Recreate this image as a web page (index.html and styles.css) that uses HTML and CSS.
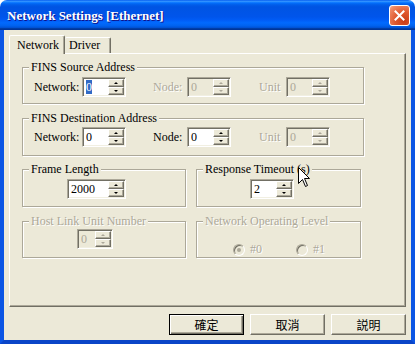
FILE: index.html
```
<!DOCTYPE html>
<html lang="zh-Hant">
<head>
    <meta charset="UTF-8">
    <title>Network Settings [Ethernet]</title>
    <link rel="stylesheet" href="styles.css">
</head>
<body>
    <div class="window">
        <div class="titlebar">
            <span class="title">Network Settings [Ethernet]</span>
            <button class="close" aria-label="Close">
                <svg width="11" height="11" viewBox="0 0 11 11"><path d="M1.5 1.5 L9.5 9.5 M9.5 1.5 L1.5 9.5" stroke="#fff" stroke-width="2" stroke-linecap="square"/></svg>
            </button>
        </div>

        <div class="frame">
            <div class="tabs">
                <div class="tab active">Network</div>
                <div class="tab">Driver</div>
            </div>

            <div class="pane">
                <div class="group g-src">
                    <span class="group-title">FINS Source Address</span>
                    <div class="row">
                        <label class="lbl lbl-net">Network:</label>
                        <div class="spin"><span class="val"><span class="sel">0</span></span><span class="arrows"><span class="arrow up"></span><span class="arrow down"></span></span></div>
                        <label class="lbl lbl-node disabled">Node:</label>
                        <div class="spin off"><span class="val">0</span><span class="arrows"><span class="arrow up"></span><span class="arrow down"></span></span></div>
                        <label class="lbl lbl-unit disabled">Unit</label>
                        <div class="spin off"><span class="val">0</span><span class="arrows"><span class="arrow up"></span><span class="arrow down"></span></span></div>
                    </div>
                </div>

                <div class="group g-dst">
                    <span class="group-title">FINS Destination Address</span>
                    <div class="row">
                        <label class="lbl lbl-net">Network:</label>
                        <div class="spin"><span class="val">0</span><span class="arrows"><span class="arrow up"></span><span class="arrow down"></span></span></div>
                        <label class="lbl lbl-node">Node:</label>
                        <div class="spin"><span class="val">0</span><span class="arrows"><span class="arrow up"></span><span class="arrow down"></span></span></div>
                        <label class="lbl lbl-unit disabled">Unit</label>
                        <div class="spin off"><span class="val">0</span><span class="arrows"><span class="arrow up"></span><span class="arrow down"></span></span></div>
                    </div>
                </div>

                <div class="pair">
                    <div class="group g-small g-frame">
                        <span class="group-title">Frame Length</span>
                        <div class="spin wide"><span class="val">2000</span><span class="arrows"><span class="arrow up"></span><span class="arrow down"></span></span></div>
                    </div>
                    <div class="group g-small g-timeout">
                        <span class="group-title">Response Timeout (s)</span>
                        <div class="spin"><span class="val">2</span><span class="arrows"><span class="arrow up"></span><span class="arrow down"></span></span></div>
                    </div>
                </div>

                <div class="pair">
                    <div class="group g-small g-host">
                        <span class="group-title disabled">Host Link Unit Number</span>
                        <div class="spin off narrow"><span class="val">0</span><span class="arrows"><span class="arrow up"></span><span class="arrow down"></span></span></div>
                    </div>
                    <div class="group g-small g-level">
                        <span class="group-title disabled">Network Operating Level</span>
                        <div class="radios">
                            <span class="radio-item"><span class="radio checked"></span><span class="disabled">#0</span></span>
                            <span class="radio-item"><span class="radio"></span><span class="disabled">#1</span></span>
                        </div>
                    </div>
                </div>
            </div>

            <div class="buttons">
                <button class="btn default">確定</button>
                <button class="btn">取消</button>
                <button class="btn">説明</button>
            </div>
        </div>

        <!-- mouse pointer over the timeout label -->
        <svg class="pointer" width="13" height="21" viewBox="0 0 13 21">
            <path d="M0.5 0.5 L0.5 16.5 L4.5 12.5 L7.5 19.5 L9.5 18.5 L6.5 11.5 L11.5 11.5 Z" fill="#fff" stroke="#000" stroke-width="1"/>
        </svg>
    </div>
</body>
</html>
```

FILE: styles.css
```
* {
    box-sizing: border-box;
}

body {
    margin: 0;
    background: #fff;
    font-family: "Liberation Serif", "Noto Sans CJK TC", serif;
    font-size: 12px;
    color: #000;
}

.window {
    position: relative;
    width: 415px;
    height: 344px;
    display: flex;
    flex-direction: column;
}

/* title bar */
.titlebar {
    height: 30px;
    flex: none;
    display: flex;
    align-items: center;
    justify-content: space-between;
    padding: 0 5px 0 7px;
    border-radius: 7px 7px 0 0;
    background: linear-gradient(to bottom, #0058ee 0%, #3593ff 4%, #288eff 6%, #127dff 8%, #036ffc 10%, #0262ee 14%, #0057e5 20%, #0054e3 24%, #0055eb 56%, #005bf5 66%, #026afe 76%, #0062ef 86%, #0052d6 92%, #0040ab 94%, #003092 100%);
}

.title {
    color: #fff;
    font-weight: bold;
    font-size: 13px;
    text-shadow: 1px 1px #0f1089;
    padding-top: 1px;
}

.close {
    width: 21px;
    height: 21px;
    padding: 0;
    border: 1px solid #fff;
    border-radius: 3px;
    background: radial-gradient(circle at 90% 90%, #cc4600 0%, #dc6527 55%, #cd7546 70%, #ffccb2 90%, #fff 100%);
    background: radial-gradient(circle at 75% 80%, #c93c16 0%, #e0592f 45%, #ef8a66 85%, #f7b8a0 100%);
    display: flex;
    align-items: center;
    justify-content: center;
}

.close svg {
    display: block;
}

/* client area */
.frame {
    flex: 1;
    display: flex;
    flex-direction: column;
    background: #ece9d8;
    border: 4px solid #0b55e4;
    border-top: none;
    border-bottom-color: #0a45c8;
    padding: 5px 5px 5px 5px;
}

.tabs {
    display: flex;
    align-items: flex-end;
    height: 18px;
    position: relative;
    z-index: 1;
}

.tab {
    height: 16px;
    line-height: 15px;
    padding: 0 6px 0 4px;
    border-top: 1px solid #fff;
    border-left: 1px solid #fff;
    border-right: 1px solid #716f64;
    box-shadow: inset -1px 0 #aca899;
    border-radius: 2px 2px 0 0;
    background: #ece9d8;
}

.tab.active {
    width: 56px;
    height: 19px;
    line-height: 18px;
    margin-bottom: -1px;
    padding-left: 7px;
}

.tab:not(.active) {
    width: 46px;
    border-left: none;
}

.pane {
    height: 254px;
    border: 1px solid;
    border-color: #fff #716f64 #716f64 #fff;
    box-shadow: inset -1px -1px #aca899;
    padding: 13px 12px 0 12px;
}

/* group boxes */
.group {
    position: relative;
    border: 1px solid #aca899;
    box-shadow: inset 1px 1px #fff, 1px 1px #fff;
}

.group-title {
    position: absolute;
    top: -8px;
    left: 6px;
    padding: 0 2px;
    line-height: 14px;
    background: #ece9d8;
}

.g-src {
    width: 342px;
    height: 37px;
    padding: 9px 0 0 11px;
}

.g-dst {
    width: 342px;
    height: 38px;
    margin-top: 14px;
    padding: 8px 0 0 11px;
}

.pair {
    display: flex;
    gap: 10px;
    margin-top: 13px;
}

.pair + .pair {
    margin-top: 14px;
}

.g-small {
    width: 164px;
    height: 38px;
    padding-top: 9px;
}

.g-timeout {
    width: 165px;
    padding-left: 53px;
}

.g-frame {
    padding-left: 44px;
}

.g-host {
    height: 37px;
    padding: 7px 0 0 54px;
}

.g-level {
    width: 165px;
    height: 37px;
}

.row {
    display: flex;
    align-items: center;
}

.lbl {
    flex: none;
}

.lbl-net {
    width: 48px;
}

.lbl-node {
    width: 34px;
    margin-left: 27px;
}

.lbl-unit {
    width: 27px;
    margin-left: 28px;
}

.disabled {
    color: #aca899;
    text-shadow: 1px 1px #fff;
}

/* spin edit */
.spin {
    flex: none;
    display: flex;
    width: 44px;
    height: 20px;
    padding: 1px;
    border: 1px solid;
    border-color: #aca899 #fff #fff #aca899;
    box-shadow: inset 1px 1px #716f64, inset -1px -1px #f1efe2;
    background: #fff;
}

.spin.wide {
    width: 59px;
}

.spin.narrow {
    width: 36px;
}

.spin.off {
    background: #ece9d8;
    color: #aca899;
}

.val {
    flex: 1;
    padding: 1px 0 0 2px;
    line-height: 15px;
}

.sel {
    background: #316ac5;
    color: #fff;
    outline: 1px dotted #fff;
}

.arrows {
    width: 16px;
    display: flex;
    flex-direction: column;
}

.arrow {
    flex: 1;
    display: flex;
    align-items: center;
    justify-content: center;
    background: #ece9d8;
    border: 1px solid;
    border-color: #fff #716f64 #716f64 #fff;
    box-shadow: inset -1px -1px #aca899;
}

.arrow::after {
    content: "";
    border: 2px solid transparent;
}

.arrow.up::after {
    border-bottom-color: #000;
    border-top-width: 0;
}

.arrow.down::after {
    border-top-color: #000;
    border-bottom-width: 0;
}

.off .arrow::after {
    filter: none;
}

.off .arrow.up::after {
    border-bottom-color: #aca899;
}

.off .arrow.down::after {
    border-top-color: #aca899;
}

/* radios */
.radios {
    display: flex;
    gap: 34px;
    padding: 11px 0 0 36px;
}

.radio-item {
    display: flex;
    align-items: center;
    gap: 5px;
}

.radio {
    width: 12px;
    height: 12px;
    border-radius: 50%;
    border: 1px solid;
    border-color: #aca899 #fff #fff #aca899;
    box-shadow: inset 1px 1px #716f64;
    background: #ece9d8;
    display: flex;
    align-items: center;
    justify-content: center;
}

.radio.checked::after {
    content: "";
    width: 4px;
    height: 4px;
    border-radius: 50%;
    background: #aca899;
}

/* bottom buttons */
.buttons {
    display: flex;
    justify-content: flex-end;
    gap: 6px;
    margin-top: 7px;
}

.btn {
    width: 75px;
    height: 21px;
    padding: 0;
    font-family: "Noto Sans CJK TC", sans-serif;
    font-size: 12px;
    line-height: 17px;
    color: #000;
    background: #ece9d8;
    border: 1px solid;
    border-color: #fff #716f64 #716f64 #fff;
    box-shadow: inset -1px -1px #aca899;
}

.btn.default {
    border: 1px solid #000;
    box-shadow: inset 1px 1px #fff, inset -1px -1px #716f64, inset -2px -2px #aca899;
}

.pointer {
    position: absolute;
    left: 298px;
    top: 167px;
}
```
